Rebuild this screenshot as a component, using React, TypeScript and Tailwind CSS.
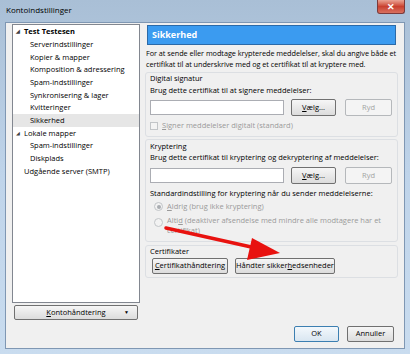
import React from "react";

const font = { fontFamily: '"Open Sans", "Noto Sans", sans-serif' };

type TreeItem = { label: string; level: 0 | 1; expander?: boolean; bold?: boolean; selected?: boolean };

const treeItems: TreeItem[] = [
  { label: "Test Testesen", level: 0, expander: true, bold: true },
  { label: "Serverindstillinger", level: 1 },
  { label: "Kopier & mapper", level: 1 },
  { label: "Komposition & adressering", level: 1 },
  { label: "Spam-indstillinger", level: 1 },
  { label: "Synkronisering & lager", level: 1 },
  { label: "Kvitteringer", level: 1 },
  { label: "Sikkerhed", level: 1, selected: true },
  { label: "Lokale mapper", level: 0, expander: true },
  { label: "Spam-indstillinger", level: 1 },
  { label: "Diskplads", level: 1 },
  { label: "Udgående server (SMTP)", level: 0 },
];

function WinButton({
  children,
  className = "",
  disabled = false,
  isDefault = false,
}: {
  children: React.ReactNode;
  className?: string;
  disabled?: boolean;
  isDefault?: boolean;
}) {
  const tone = disabled
    ? "border-[#b5b8bb] bg-[#f4f4f4] text-[#a3a3a3]"
    : isDefault
      ? "border-[#3c7fb1] bg-gradient-to-b from-[#f3f8fc] to-[#d9e6f1] text-black"
      : "border-[#707070] bg-gradient-to-b from-[#f6f6f6] to-[#dcdcdc] text-black";
  return (
    <div
      className={`flex items-center justify-center rounded-[2px] border text-[7.5px] leading-none ${tone} ${className}`}
    >
      {children}
    </div>
  );
}

function GroupBox({ className = "", children }: { className?: string; children: React.ReactNode }) {
  return (
    <div className={`rounded-[3px] border border-[#dcdfe3] px-[4px] ${className}`}>{children}</div>
  );
}

function CertRow() {
  return (
    <div className="flex items-center">
      <div className="h-[15px] w-[134px] border border-[#abadb3] bg-white" />
      <WinButton className="ml-[7px] h-[17px] w-[45px]">
        <span>
          <u>V</u>ælg...
        </span>
      </WinButton>
      <WinButton disabled className="ml-[9px] h-[17px] w-[47px]">
        Ryd
      </WinButton>
    </div>
  );
}

function Radio({ checked = false }: { checked?: boolean }) {
  return (
    <div className="flex h-[9px] w-[9px] items-center justify-center rounded-full border border-[#c2c5c8] bg-[#f2f2f2]">
      {checked && <div className="h-[4px] w-[4px] rounded-full bg-[#a9adb1]" />}
    </div>
  );
}

export default function App() {
  return (
    <div
      className="relative h-[354px] w-[410px] overflow-hidden bg-gradient-to-b from-[#a9bfd6] via-[#bfd4ea] to-[#c9dcef]"
      style={font}
    >
      {/* title bar */}
      <div className="flex h-[22px] items-start justify-between">
        <div className="pl-[6px] pt-[5px] text-[8px] leading-[10px] text-black">Kontoindstillinger</div>
        <div className="mr-[5px] flex h-[14px] w-[28px] items-center justify-center rounded-b-[3px] border border-t-0 border-[#7c3a3a] bg-gradient-to-b from-[#e9a394] via-[#c9402f] to-[#d8705f] text-[9px] font-bold leading-none text-white">
          ✕
        </div>
      </div>

      {/* dialog body */}
      <div className="ml-[5px] flex h-[327px] w-[400px] border border-[#7f97b3] bg-[#f0f0f0] text-[7.5px] text-black">
        {/* left column */}
        <div className="ml-[6px] flex w-[128px] flex-col pt-[1px]">
          <div className="h-[279px] border border-[#828790] bg-white pt-[0.5px]">
            {treeItems.map((it, i) => (
              <div
                key={i}
                className={`flex h-[12.7px] items-center ${it.selected ? "bg-[#e6e6e6]" : ""}`}
              >
                <span
                  className={`flex items-center ${it.level === 0 ? "pl-[3px]" : "pl-[17px]"} ${it.bold ? "font-bold" : ""}`}
                >
                  {it.level === 0 && (
                    <span className="mr-[3px] inline-block w-[5px] text-[5px] leading-none text-[#404040]">
                      {it.expander ? "◢" : ""}
                    </span>
                  )}
                  {it.label}
                </span>
              </div>
            ))}
          </div>
          <WinButton className="relative ml-[2px] mt-[2px] h-[15px] w-[124px]">
            <span>
              <u>K</u>ontohåndtering
            </span>
            <span className="absolute right-[8px] top-[4px] text-[5px]">▼</span>
          </WinButton>
        </div>

        {/* right column */}
        <div className="ml-[5px] flex w-[253px] flex-col pt-[2px]">
          <div className="mx-[2px] flex h-[20px] items-center border border-[#2b6aa8] bg-[#3b9bf0] pl-[4px] text-[9px] font-bold text-white">
            Sikkerhed
          </div>
          <div className="mt-[3px] whitespace-nowrap pl-[1px] text-[7.3px] leading-[11px] tracking-[-0.05px]">
            For at sende eller modtage krypterede meddelelser, skal du angive både et
            <br />
            certifikat til at underskrive med og et certifikat til at kryptere med.
          </div>

          <GroupBox className="mt-[2px] h-[65px]">
            <div className="leading-[11px]">Digital signatur</div>
            <div className="mt-[1px] leading-[11px]">Brug dette certifikat til at signere meddelelser:</div>
            <div className="mt-[3px]">
              <CertRow />
            </div>
            <div className="mt-[4px] flex items-center text-[#9a9a9a]">
              <div className="mr-[4px] h-[8px] w-[8px] border border-[#c2c5c8] bg-[#f4f4f4]" />
              <span>
                <u>S</u>igner meddelelser digitalt (standard)
              </span>
            </div>
          </GroupBox>

          <GroupBox className="mt-[2px] h-[103px] pt-[1px]">
            <div className="leading-[11px]">Kryptering</div>
            <div className="leading-[11px]">
              Brug dette certifikat til kryptering og dekryptering af meddelelser:
            </div>
            <div className="mt-[4px]">
              <CertRow />
            </div>
            <div className="mt-[4px] leading-[11px]">
              Standardindstilling for kryptering når du sender meddelelserne:
            </div>
            <div className="mt-[2px] flex items-center pl-[4px] text-[#9a9a9a]">
              <Radio checked />
              <span className="ml-[4px]">
                <u>A</u>ldrig (brug ikke kryptering)
              </span>
            </div>
            <div className="mt-[3px] flex items-start pl-[4px] text-[#9a9a9a]">
              <div className="mt-[3px]">
                <Radio />
              </div>
              <span className="ml-[4px] leading-[10px]">
                Alti<u>d</u> (deaktiver afsendelse med mindre alle modtagere har et
                <br />
                certifikat)
              </span>
            </div>
          </GroupBox>

          <GroupBox className="mt-[3px] h-[33px]">
            <div className="leading-[11px]">Certifikater</div>
            <div className="mt-[1px] flex">
              <WinButton className="ml-[2px] h-[16px] w-[76px]">
                <span>
                  <u>C</u>ertifikathåndtering
                </span>
              </WinButton>
              <WinButton className="ml-[7px] h-[16px] w-[100px]">
                <span>
                  Håndter sikker<u>h</u>edsenheder
                </span>
              </WinButton>
            </div>
          </GroupBox>

          <div className="mb-[6px] mt-auto flex justify-end pr-[4px]">
            <WinButton isDefault className="h-[16px] w-[45px]">
              OK
            </WinButton>
            <WinButton className="ml-[8px] h-[16px] w-[47px]">Annuller</WinButton>
          </div>
        </div>
      </div>

      {/* red annotation arrow */}
      <svg className="pointer-events-none absolute left-0 top-0" width="410" height="354">
        <line x1="166" y1="228" x2="258" y2="248.5" stroke="#e8120f" strokeWidth="3.5" strokeLinecap="round" />
        <polygon points="280,253 252,238 247,260" fill="#e8120f" />
      </svg>
    </div>
  );
}
